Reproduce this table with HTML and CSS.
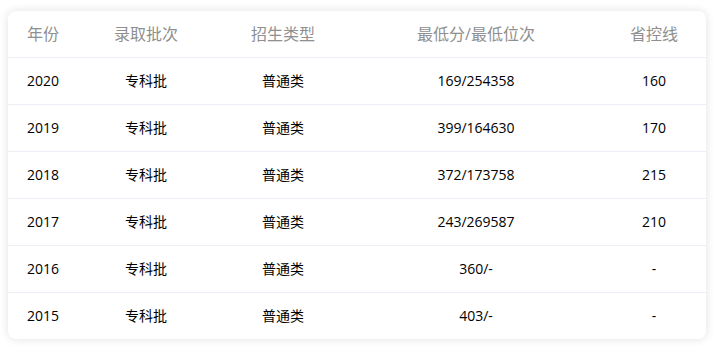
FILE: index.html
```html
<!DOCTYPE html>
<html lang="zh-CN">
<head>
    <meta charset="UTF-8">
    <meta name="viewport" content="width=device-width, initial-scale=1.0">
    <title>历年分数线</title>
    <link rel="stylesheet" href="styles.css">
</head>
<body>
    <div class="score-card">
        <div class="score-row score-head">
            <div class="cell cell-year">年份</div>
            <div class="cell">录取批次</div>
            <div class="cell">招生类型</div>
            <div class="cell">最低分/最低位次</div>
            <div class="cell cell-line">省控线</div>
        </div>
        <div class="score-row">
            <div class="cell cell-year">2020</div>
            <div class="cell">专科批</div>
            <div class="cell">普通类</div>
            <div class="cell">169/254358</div>
            <div class="cell cell-line">160</div>
        </div>
        <div class="score-row">
            <div class="cell cell-year">2019</div>
            <div class="cell">专科批</div>
            <div class="cell">普通类</div>
            <div class="cell">399/164630</div>
            <div class="cell cell-line">170</div>
        </div>
        <div class="score-row">
            <div class="cell cell-year">2018</div>
            <div class="cell">专科批</div>
            <div class="cell">普通类</div>
            <div class="cell">372/173758</div>
            <div class="cell cell-line">215</div>
        </div>
        <div class="score-row">
            <div class="cell cell-year">2017</div>
            <div class="cell">专科批</div>
            <div class="cell">普通类</div>
            <div class="cell">243/269587</div>
            <div class="cell cell-line">210</div>
        </div>
        <div class="score-row">
            <div class="cell cell-year">2016</div>
            <div class="cell">专科批</div>
            <div class="cell">普通类</div>
            <div class="cell">360/-</div>
            <div class="cell cell-line">-</div>
        </div>
        <div class="score-row">
            <div class="cell cell-year">2015</div>
            <div class="cell">专科批</div>
            <div class="cell">普通类</div>
            <div class="cell">403/-</div>
            <div class="cell cell-line">-</div>
        </div>
    </div>
</body>
</html>
```

FILE: styles.css
```css
body {
    margin: 0;
    padding: 11px 11px 8px 8px;
    background: #fff;
    font-family: "Open Sans", "Noto Sans CJK SC", sans-serif;
}
.score-card {
    width: 698px;
    background: #fff;
    border-radius: 8px;
    box-shadow: 0 0 10px rgba(0, 0, 0, 0.12);
    overflow: hidden;
}
.score-row {
    display: grid;
    grid-template-columns: 80px 116px 158px 228px 1fr;
    align-items: center;
    box-sizing: border-box;
    height: 47px;
    padding-bottom: 2px;
    border-top: 1px solid #ebeef5;
    font-size: 14px;
    color: #000;
}
.score-head {
    height: 46px;
    border-top: none;
    font-size: 16px;
    color: #8f8f8f;
}
.cell {
    text-align: center;
    white-space: nowrap;
}
.cell-year {
    text-align: left;
    padding-left: 19px;
}
.cell-line {
    padding-left: 12px;
}
```
